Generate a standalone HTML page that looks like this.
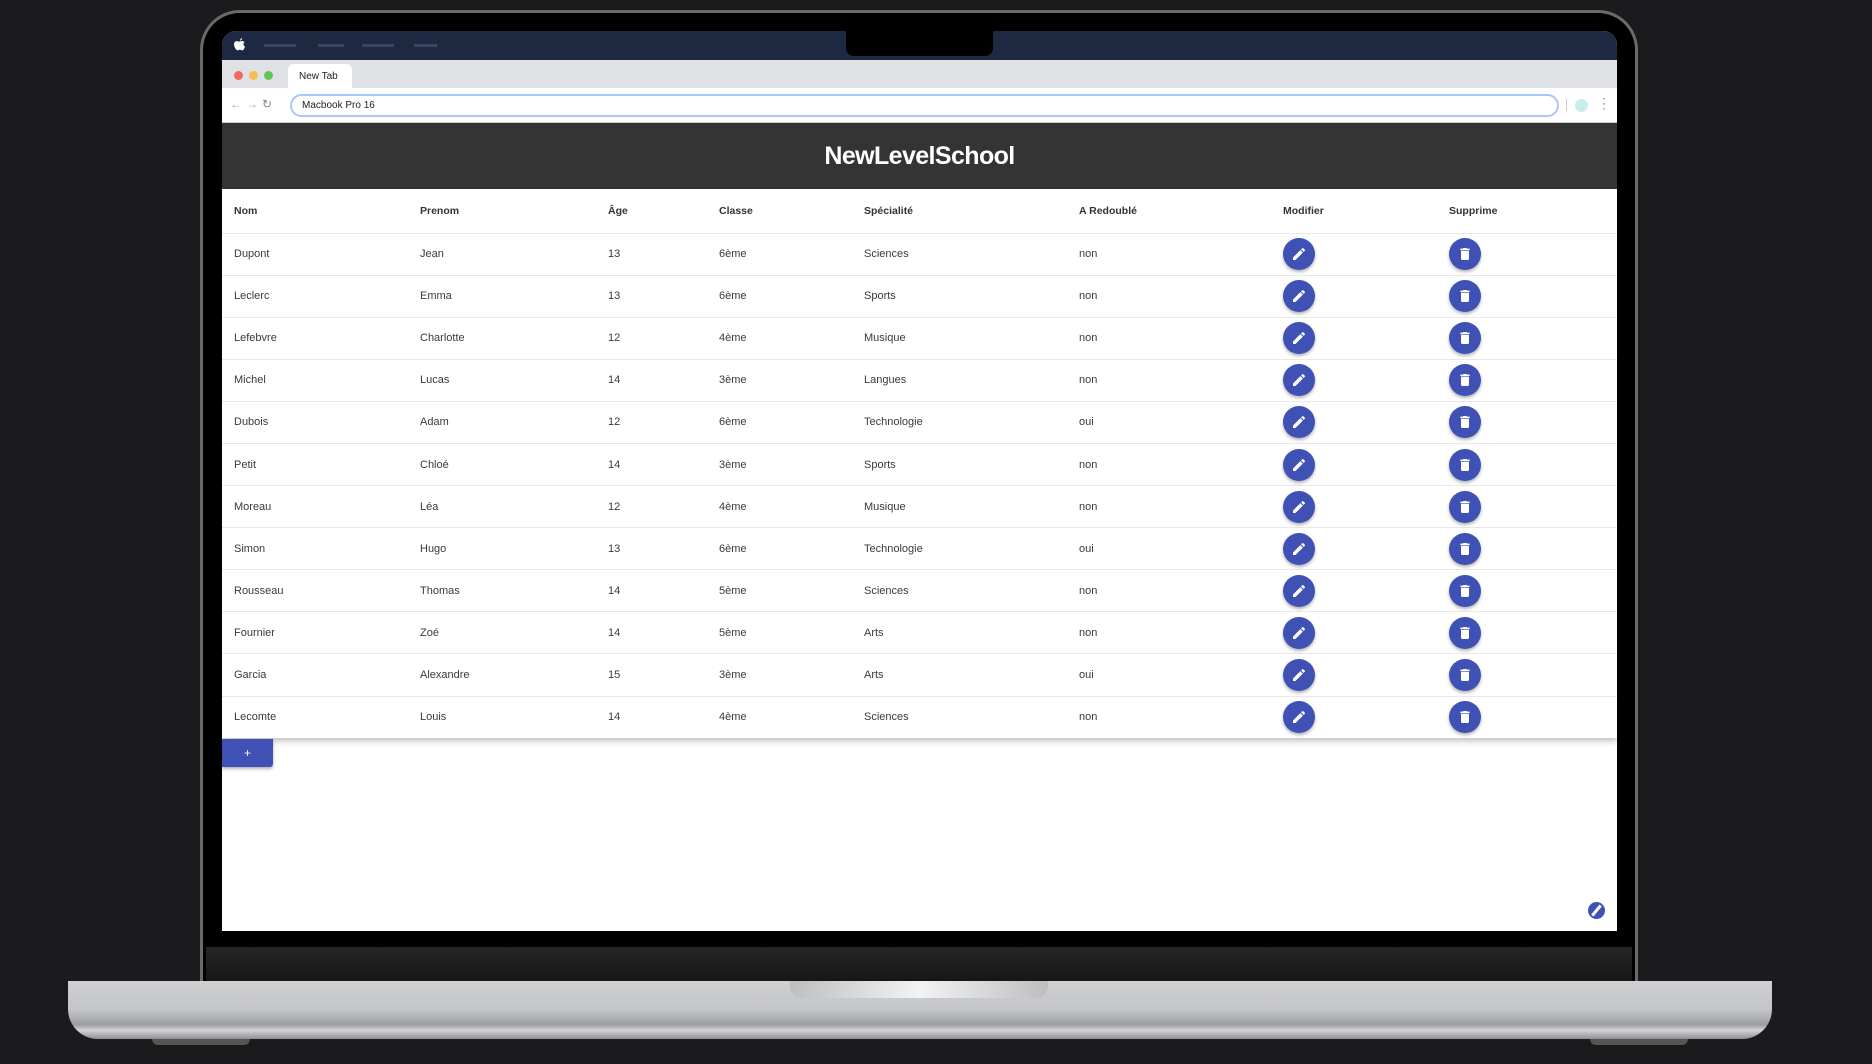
<!DOCTYPE html>
<html><head><meta charset="utf-8"><style>
*{box-sizing:border-box;margin:0;padding:0}
body{width:1872px;height:1064px;background:#1b1b1d;position:relative;overflow:hidden;font-family:"Liberation Sans",sans-serif}
.abs{position:absolute}
.bezel{left:200px;top:10px;width:1438px;height:975px;border-radius:40px 40px 0 0;background:#000;border:3px solid #6a6a6c;border-bottom:none}
.screen{left:222px;top:31px;width:1395px;height:900px;background:#fff;border-radius:14px 14px 0 0;overflow:hidden}
.menubar{left:0;top:0;width:1395px;height:29px;background:#1d2940}
.notch{left:624px;top:0;width:147px;height:25px;background:#000;border-radius:0 0 8px 8px}
.tabbar{left:0;top:29px;width:1395px;height:28px;background:#dfe1e5}
.tab{left:66px;top:4px;width:64px;height:24px;background:#fff;border-radius:6px 6px 0 0;font-size:10px;color:#222;padding:7px 0 0 11px}
.dot{top:11px;width:9px;height:9px;border-radius:50%}
.addr{left:0;top:57px;width:1395px;height:35px;background:#fff;border-bottom:1px solid #ccc}
.input{left:68px;top:6px;width:1269px;height:23px;border:2px solid #a8c7fa;border-radius:12px;font-size:10px;color:#222;padding:4px 10px}
.head{left:0;top:92px;width:1395px;height:66px;background:#343434;color:#fff;font-weight:bold;font-size:25px;letter-spacing:-0.6px;text-align:center;line-height:66px}
table{position:absolute;left:0;top:158px;width:1395px;border-collapse:collapse;font-size:11px;color:#3a3a3a;box-shadow:0 3px 6px rgba(0,0,0,.25);background:#fff}
th{height:44px;text-align:left;font-weight:bold;color:#333;font-size:10.5px}
td{height:42.1px;border-top:1px solid #e8e8e8}
th,td{padding:0;white-space:nowrap}
.c1{padding-left:12px;width:198px}.c2{width:188px}.c3{width:111px}.c4{width:145px}.c5{width:215px}.c6{width:204px}.c7{width:166px}
.btn{display:inline-block;width:32px;height:32px;border-radius:50%;background:#3f51b5;box-shadow:0 2px 3px rgba(0,0,0,.3);vertical-align:middle;position:relative}
.btn svg{position:absolute;left:8px;top:8px}
.add{left:0;top:708px;width:51px;height:28px;background:#3f51b5;color:#fff;font-size:12px;text-align:center;line-height:28px;border-radius:0 0 3px 0;box-shadow:0 2px 3px rgba(0,0,0,.3)}
</style></head><body>
<div class="abs bezel"></div>
<div class="abs screen">
 <div class="abs menubar">
  <svg class="abs" style="left:12px;top:7px" width="12" height="14" viewBox="0 0 12 14"><path d="M8 0c0 1.5-1 2.5-2 2.6C6 1.3 7 .2 8 0zM6 3.5c1-.4 2-.8 3.2-.3.6.2 1.1.7 1.4 1.1-1.8 1-1.5 3.5.4 4.3-.5 1.6-1.6 3.8-2.8 3.8-1 0-1.2-.6-2.300-.6s-1.4.6-2.3.6C2.3 12.4 0 9 0 6.3 0 3.7 2.3 2.7 3.6 3.3 4.4 3.7 5.3 3.8 6 3.5z" fill="#fff"/></svg>
  <div class="abs" style="left:42px;top:13px;width:32px;height:3px;background:#3b4560"></div>
  <div class="abs" style="left:96px;top:13px;width:26px;height:3px;background:#3b4560"></div>
  <div class="abs" style="left:140px;top:13px;width:32px;height:3px;background:#3b4560"></div>
  <div class="abs" style="left:192px;top:13px;width:23px;height:3px;background:#3b4560"></div>
  <div class="abs notch"></div>
 </div>
 <div class="abs tabbar">
  <div class="abs dot" style="left:12px;background:#ec6a5e"></div>
  <div class="abs dot" style="left:27px;background:#f4bf4f"></div>
  <div class="abs dot" style="left:42px;background:#61c554"></div>
  <div class="abs tab">New Tab</div>
 </div>
 <div class="abs addr">
  <div class="abs" style="left:8px;top:9px;font-size:12px;color:#aaa">←</div>
  <div class="abs" style="left:24px;top:9px;font-size:12px;color:#aaa">→</div>
  <div class="abs" style="left:40px;top:9px;font-size:12px;color:#888">↻</div>
  <div class="abs input">Macbook Pro 16</div>
  <div class="abs" style="left:1344px;top:11px;width:1px;height:12px;background:#ccc"></div>
  <div class="abs" style="left:1353px;top:11px;width:13px;height:13px;border-radius:50%;background:#c9ecef"></div>
  <div class="abs" style="left:1380px;top:8px;font-size:12px;color:#666;line-height:5px">·<br>·<br>·</div>
 </div>
 <div class="abs head">NewLevelSchool</div>
 <table>
  <tr><th class="c1">Nom</th><th class="c2">Prenom</th><th class="c3">Âge</th><th class="c4">Classe</th><th class="c5">Spécialité</th><th class="c6">A Redoublé</th><th class="c7">Modifier</th><th>Supprime</th></tr>
 </table>
 <div class="abs add">+</div>
 <div class="abs" style="left:1366px;top:871px;width:17px;height:17px;border-radius:50%;background:#3f51b5"><div style="position:absolute;left:7px;top:2px;width:3px;height:13px;background:#fff;transform:rotate(40deg)"></div></div>
</div>
<div class="abs" style="left:222px;top:931px;width:1395px;height:16px;background:#000"></div>
<div class="abs" style="left:206px;top:947px;width:1426px;height:34px;background:linear-gradient(#262626,#161616)"></div>
<div class="abs" style="left:68px;top:981px;width:1704px;height:58px;border-radius:0 0 30px 30px;background:linear-gradient(#cfd0d2 0%,#c4c5c7 50%,#9c9da0 75%,#d3d3d5 85%,#8f9093 100%)"></div>
<div class="abs" style="left:790px;top:981px;width:258px;height:17px;border-radius:0 0 12px 12px;background:linear-gradient(90deg,#bdbec0,#f2f3f5 50%,#bdbec0)"></div>
<div class="abs" style="left:152px;top:1039px;width:98px;height:6px;background:#555;border-radius:0 0 8px 8px"></div>
<div class="abs" style="left:1590px;top:1039px;width:98px;height:6px;background:#555;border-radius:0 0 8px 8px"></div>
<script>
const d=[["Dupont","Jean",13,"6ème","Sciences","non"],["Leclerc","Emma",13,"6ème","Sports","non"],["Lefebvre","Charlotte",12,"4ème","Musique","non"],["Michel","Lucas",14,"3ème","Langues","non"],["Dubois","Adam",12,"6ème","Technologie","oui"],["Petit","Chloé",14,"3ème","Sports","non"],["Moreau","Léa",12,"4ème","Musique","non"],["Simon","Hugo",13,"6ème","Technologie","oui"],["Rousseau","Thomas",14,"5ème","Sciences","non"],["Fournier","Zoé",14,"5ème","Arts","non"],["Garcia","Alexandre",15,"3ème","Arts","oui"],["Lecomte","Louis",14,"4ème","Sciences","non"]];
const pen='<span class="btn"><svg width="16" height="16" viewBox="0 0 24 24"><path fill="#fff" d="M3 17.25V21h3.75L17.8 9.94l-3.75-3.75zM20.7 7.04a1 1 0 000-1.41l-2.34-2.34a1 1 0 00-1.41 0l-1.83 1.83 3.75 3.75z"/></svg></span>';
const bin='<span class="btn"><svg width="16" height="16" viewBox="0 0 24 24"><path fill="#fff" d="M6 19c0 1.1.9 2 2 2h8c1.1 0 2-.9 2-2V7H6zM19 4h-3.5l-1-1h-5l-1 1H5v2h14z"/></svg></span>';
let h='';d.forEach(r=>{h+='<tr><td class="c1">'+r[0]+'</td><td>'+r[1]+'</td><td>'+r[2]+'</td><td>'+r[3]+'</td><td>'+r[4]+'</td><td>'+r[5]+'</td><td>'+pen+'</td><td>'+bin+'</td></tr>'});
document.querySelector('tbody').insertAdjacentHTML('beforeend',h);
</script>
</body></html>
